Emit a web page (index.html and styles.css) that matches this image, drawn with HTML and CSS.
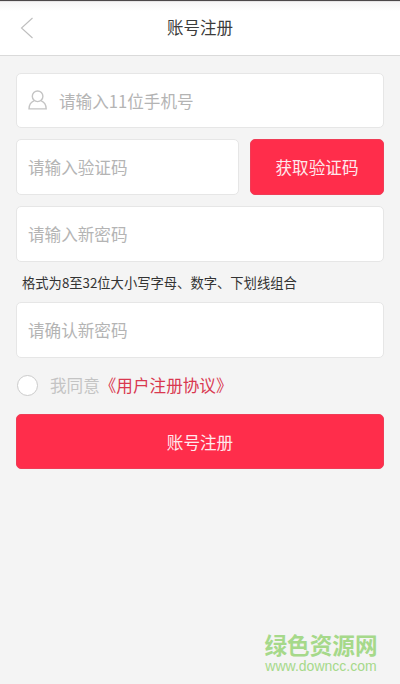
FILE: index.html
```html
<!DOCTYPE html>
<html lang="zh-CN">
<head>
<meta charset="utf-8">
<title>账号注册</title>
<link rel="stylesheet" href="styles.css">
</head>
<body>
<header class="topbar">
  <svg class="back" viewBox="0 0 14 22"><path d="M12.5 1 1.5 11l11 10"/></svg>
  <h1>账号注册</h1>
</header>
<main class="form">
  <div class="field phone">
    <svg class="user" viewBox="0 0 20 20"><circle cx="9.6" cy="6.3" r="5.3"/><path d="M6.3 10.7C3 12 1.1 14.600 1 18.900H18.200C18.100 14.600 16.200 12 12.900 10.700"/></svg>
    <span>请输入11位手机号</span>
  </div>
  <div class="code-row">
    <div class="field">请输入验证码</div>
    <div class="button">获取验证码</div>
  </div>
  <div class="field">请输入新密码</div>
  <p class="hint">格式为8至32位大小写字母、数字、下划线组合</p>
  <div class="field">请确认新密码</div>
  <div class="agree">
    <span class="radio"></span>
    <span class="agree-text">我同意</span>
    <span class="agreement">《用户注册协议》</span>
  </div>
  <div class="button">账号注册</div>
</main>
<footer class="watermark">
  <div class="site-name">绿色资源网</div>
  <div class="site-url">www.downcc.com</div>
</footer>
</body>
</html>
```
FILE: styles.css
```css
* { box-sizing: border-box; }
body {
  margin: 0;
  height: 684px;
  display: flex;
  flex-direction: column;
  overflow: hidden;
  background: #f4f4f4;
  font: 16.6px/24px "Noto Sans CJK SC", sans-serif;
}
.topbar {
  height: 56px;
  display: grid;
  grid-template-columns: 40px 1fr 40px;
  align-items: center;
  border-top: 1px solid #4c484a;
  border-bottom: 1px solid #dadada;
  background: linear-gradient(#d5d3d4 0, #f6f5f6 1px, #fff 10px);
}
.back {
  width: 14px;
  height: 22px;
  margin-left: 20px;
  fill: none;
  stroke: #bebebe;
  stroke-width: 1.1;
}
h1 {
  margin: 0;
  padding-bottom: 2px;
  text-align: center;
  font-size: 16.5px;
  font-weight: 400;
  color: #3c3c3c;
}
.form {
  padding: 17px 16px 0;
  display: flex;
  flex-direction: column;
}
.field {
  height: 55px;
  padding: 0 11px;
  display: flex;
  align-items: center;
  border: 1px solid #e6e6e6;
  border-radius: 5px;
  background: #fff;
  color: #b4b4b4;
}
.form > .field:not(.phone) { height: 56px; }
.user {
  width: 20px;
  height: 20px;
  margin: 0 11px 1px 0;
  fill: none;
  stroke: #c4c4c4;
  stroke-width: 1.4;
}
.code-row {
  display: grid;
  grid-template-columns: 223px 134px;
  gap: 11px;
  margin: 11px 0;
}
.code-row .field, .code-row .button { height: 56px; }
.button {
  height: 55px;
  display: flex;
  align-items: center;
  justify-content: center;
  border: 1px solid #ef3c56;
  border-radius: 5px;
  background: #ff2d4b;
  color: #ffe9ed;
}
.hint {
  margin: 11px 0 10px 6px;
  font-size: 13.3px;
  line-height: 19px;
  color: #333;
}
.agree {
  height: 24px;
  margin: 15px 0 17px;
  display: flex;
  align-items: center;
}
.radio {
  width: 21px;
  height: 21px;
  margin: 0 12px 0 1px;
  border: 1px solid #cbcbcb;
  border-radius: 50%;
  background: #fff;
}
.agree-text { color: #c4c4c4; }
.agreement { color: #d93850; }
.watermark {
  width: 114px;
  margin: auto 22px 10px auto;
  color: #a6d98a;
  text-align: center;
  white-space: nowrap;
}
.site-name {
  font-size: 22.6px;
  line-height: 26px;
  font-weight: 700;
}
.site-url {
  font: 14px/16px "Liberation Sans", sans-serif;
}
```
